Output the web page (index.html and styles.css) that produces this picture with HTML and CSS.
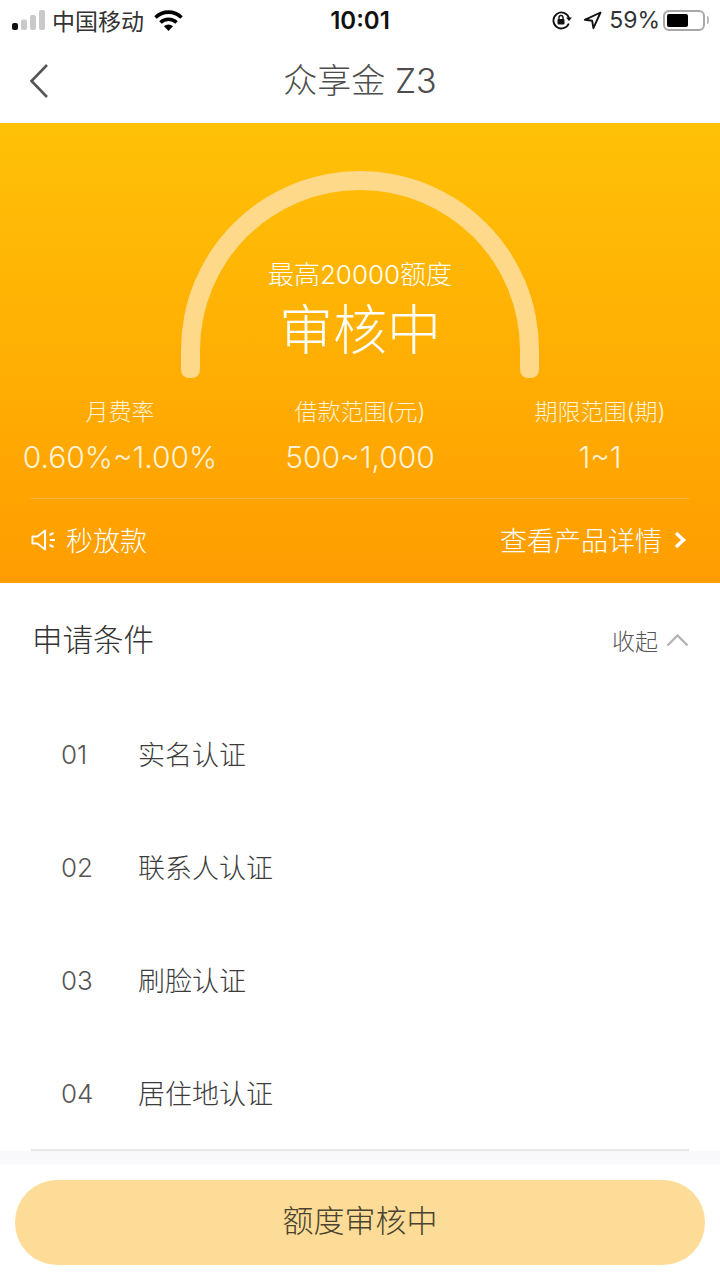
FILE: index.html
```html
<!DOCTYPE html>
<html lang="zh-CN">
<head>
<meta charset="utf-8">
<title>众享金 Z3</title>
<link rel="stylesheet" href="styles.css">
</head>
<body>
<div class="page">
  <header class="status">
    <div class="status-side">
      <svg class="signal" width="34" height="20" viewBox="0 0 34 20"><rect x="0" y="13" width="6" height="7" rx="2" fill="#111"/><rect x="9" y="9.500" width="6" height="10.500" rx="2" fill="#c9c9c9"/><rect x="18" y="5" width="6" height="15" rx="2" fill="#c9c9c9"/><rect x="27" y="0" width="6" height="20" rx="2" fill="#c9c9c9"/></svg>
      <span class="carrier">中国移动</span>
      <svg class="wifi" width="29" height="21" viewBox="0 0 29 21"><path d="M1.500 7.500a18.500 18.500 0 0 1 26 0" fill="none" stroke="#000" stroke-width="3.600"/><path d="M6.500 12.500a11.500 11.500 0 0 1 16 0" fill="none" stroke="#000" stroke-width="3.600"/><path d="M10 16.200a6.500 6.500 0 0 1 9 0L14.500 21z" fill="#000"/></svg>
    </div>
    <div class="clock">10:01</div>
    <div class="status-side status-right">
      <svg width="21" height="21" viewBox="0 0 21 21"><path d="M17.800 13.500A8 8 0 1 1 18 8" fill="none" stroke="#111" stroke-width="1.800"/><path d="M15 7.500h6l-3 3.600z" fill="#111"/><rect x="6.500" y="9" width="7" height="5.500" rx="1" fill="#111"/><path d="M8 9V7.500a2 2 0 0 1 4 0V9" fill="none" stroke="#111" stroke-width="1.400"/></svg>
      <svg class="loc" width="19" height="19" viewBox="0 0 19 19"><path d="M17.500 1.500 1.800 8.800l7.400 1 1.200 7.400z" fill="none" stroke="#111" stroke-width="1.900" stroke-linejoin="round"/></svg>
      <span class="battery-text">59%</span>
      <div class="battery"><div class="battery-level"></div></div>
      <div class="battery-cap"></div>
    </div>
  </header>

  <nav class="navbar">
    <svg class="back" width="20" height="36" viewBox="0 0 20 36"><path d="M18 2 2.500 18 18 34" fill="none" stroke="#555" stroke-width="2.600"/></svg>
    <h1 class="title">众享金 Z3</h1>
  </nav>

  <section class="hero">
    <div class="gauge">
      <svg class="arc" width="358" height="207" viewBox="0 0 358 207"><path d="M0 179A179 179 0 0 1 358 179V198Q358 207 349 207H348Q339 207 339 198V179A160 160 0 0 0 19 179V198Q19 207 10 207H9Q0 207 0 198Z" fill="#ffd98a"/></svg>
      <div class="gauge-text">
        <div class="limit">最高20000额度</div>
        <div class="state">审核中</div>
      </div>
    </div>
    <div class="stats">
      <div class="stat"><div class="stat-label">月费率</div><div class="stat-value">0.60%~1.00%</div></div>
      <div class="stat"><div class="stat-label">借款范围(元)</div><div class="stat-value">500~1,000</div></div>
      <div class="stat"><div class="stat-label">期限范围(期)</div><div class="stat-value">1~1</div></div>
    </div>
    <div class="hero-foot">
      <div class="notice">
        <svg width="26" height="24" viewBox="0 0 26 24"><path d="M1.500 8.500h5L14 2.500v19l-7.500-6h-5z" fill="none" stroke="#fff" stroke-width="2" stroke-linejoin="round"/><path d="M18.500 7l4-2M19 12h5M18.500 17l4 2" fill="none" stroke="#fff" stroke-width="2"/></svg>
        <span>秒放款</span>
      </div>
      <div class="detail">
        <span>查看产品详情</span>
        <svg width="16" height="20" viewBox="0 0 16 20"><path d="M3 3l7.500 7L3 17" fill="none" stroke="#fff" stroke-width="3.400"/></svg>
      </div>
    </div>
  </section>

  <section class="cond">
    <div class="cond-head">
      <h2 class="cond-title">申请条件</h2>
      <div class="fold">
        <span>收起</span>
        <svg width="23" height="14" viewBox="0 0 23 14"><path d="M1.500 12.500 11.500 2.500l10 10" fill="none" stroke="#b5b5b5" stroke-width="2.400"/></svg>
      </div>
    </div>
    <ul class="steps">
      <li class="step"><span class="step-no">01</span><span>实名认证</span></li>
      <li class="step"><span class="step-no">02</span><span>联系人认证</span></li>
      <li class="step"><span class="step-no">03</span><span>刷脸认证</span></li>
      <li class="step"><span class="step-no">04</span><span>居住地认证</span></li>
    </ul>
  </section>
  <div class="rule"></div>

  <footer class="foot">
    <div class="cta">额度审核中</div>
  </footer>
</div>
</body>
</html>
```

FILE: styles.css
```css
* { box-sizing: border-box; }
html, body { margin: 0; padding: 0; background: #fff; }
body { font-family: "Inter", "Noto Sans CJK SC", sans-serif; }
h1, h2, ul { margin: 0; padding: 0; font-weight: 400; list-style: none; }
.page { width: 720px; height: 1280px; overflow: hidden; display: flex; flex-direction: column; }

.status { height: 40px; display: grid; grid-template-columns: 1fr auto 1fr; align-items: center; padding: 0 10px 0 12px; color: #111; }
.status-side { display: flex; align-items: center; }
.status-right { justify-content: flex-end; padding-right: 1px; }
.signal { margin-right: 6px; }
.carrier { font-size: 23px; color: #333; }
.wifi { margin-left: 10px; }
.clock { font-size: 24px; font-weight: 600; margin-right: 2px; }
.loc { margin-left: 11px; }
.battery-text { font-size: 23px; color: #333; margin-left: 7px; margin-right: 3px; }
.battery { width: 42px; height: 21px; border: 2px solid #a8a8a8; border-radius: 6px; padding: 2px; }
.battery-level { width: 61%; height: 100%; background: #000; border-radius: 2px; }
.battery-cap { width: 2px; height: 8px; background: #bbb; margin-left: 2px; border-radius: 0 2px 2px 0; }

.navbar { height: 83px; display: flex; align-items: center; justify-content: center; position: relative; padding-bottom: 2px; }
.back { position: absolute; left: 29px; top: 23px; }
.title { font-size: 34px; color: #4d4d4d; line-height: 1; font-weight: 300; }

.hero { height: 460px; background: linear-gradient(180deg, #ffc107 0%, #ff9d00 100%); padding: 48px 0 0; color: #fff; display: flex; flex-direction: column; align-items: center; }
.gauge { width: 358px; height: 207px; position: relative; display: flex; flex-direction: column; align-items: center; padding-top: 84px; }
.arc { position: absolute; left: 0; top: 0; }
.gauge-text { position: relative; display: flex; flex-direction: column; align-items: center; }
.limit { font-size: 26px; line-height: 40px; font-weight: 300; color: #fff; }
.state { font-size: 54px; line-height: 72px; font-weight: 300; }
.stats { width: 100%; display: grid; grid-template-columns: 240px 240px 240px; margin-top: 17px; text-align: center; }
.stat-label { font-size: 23px; line-height: 36px; font-weight: 300; color: #fff3d9; }
.stat-value { font-size: 30px; line-height: 44px; margin-top: 5px; color: #fff2d8; font-weight: 300; }
.hero-foot { width: 658px; margin-top: 19px; border-top: 1px solid rgba(255,255,255,.22); display: flex; justify-content: space-between; align-items: center; height: 85px; padding-bottom: 3px; font-size: 27px; font-weight: 300; color: #fff; }
.notice, .detail { display: flex; align-items: center; }
.notice { gap: 9px; }
.detail { gap: 11px; }

.cond { padding: 0 31px; flex: 1; }
.cond-head { height: 114px; display: flex; justify-content: space-between; align-items: center; }
.cond-title { font-size: 30.500px; color: #333; font-weight: 300; padding: 0 0 4px 1px; }
.fold { display: flex; align-items: center; gap: 8px; font-size: 23px; font-weight: 300; color: #555; }
.step { height: 113px; display: flex; align-items: center; font-size: 27px; font-weight: 300; color: #3c3c3c; }
.step-no { width: 107px; padding: 2px 0 0 30px; font-size: 26px; font-weight: 300; color: #555; }
.rule { height: 2px; margin: 0 31px; background: #e8e8ea; flex: none; }
.foot { height: 129px; flex: none; background: linear-gradient(180deg, #f9f9fb 0, #f9f9fb 13px, #fff 14px); padding: 29px 15px 0; }
.cta { height: 85px; border-radius: 42px; background: #fddc97; color: #4a4330; font-size: 31px; font-weight: 300; padding-bottom: 8px; display: flex; align-items: center; justify-content: center; }
```
